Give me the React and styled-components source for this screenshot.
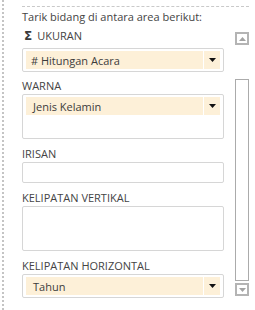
import React from 'react';
import styled, { createGlobalStyle } from 'styled-components';

const GlobalStyle = createGlobalStyle`
  html, body {
    margin: 0;
    padding: 0;
    background: #ffffff;
  }
  body {
    font-family: 'Open Sans', 'Liberation Sans', sans-serif;
    font-size: 11px;
    color: #444444;
  }
`;

const Pane = styled.div`
  display: flex;
  width: 255px;
  height: 310px;
  overflow: hidden;
`;

const DottedRule = styled.div`
  width: 0;
  margin-left: 2px;
  border-left: 2px dotted #c4c4c4;
`;

const Main = styled.div`
  display: flex;
  flex-direction: column;
  width: 227px;
  margin-left: 18px;
  padding-top: 6px;
`;

const Separator = styled.div`
  border-top: 1px dashed #c9c9c9;
`;

const Heading = styled.div`
  margin-top: 2px;
  line-height: 16px;
  white-space: nowrap;
`;

const Body = styled.div`
  display: flex;
  margin-top: 3px;
`;

const Fields = styled.div`
  display: flex;
  flex-direction: column;
  width: 202px;
`;

const Section = styled.div`
  display: flex;
  flex-direction: column;
  margin-top: ${p => p.$gap}px;
`;

const Label = styled.div`
  display: flex;
  align-items: center;
  gap: 5px;
  line-height: 16px;
  margin-bottom: ${p => (p.$sigma ? 4 : 0)}px;
  padding-left: ${p => (p.$sigma ? 2 : 0)}px;
  white-space: nowrap;
`;

const Sigma = styled.span`
  font-family: 'DejaVu Sans', sans-serif;
  font-size: 12px;
  font-weight: bold;
  color: #3a3a3a;
`;

const DropZone = styled.div`
  box-sizing: border-box;
  height: ${p => p.$height}px;
  border: 1px solid #d6d6d6;
  border-radius: 2px;
  padding: 2px 3px;
`;

const Pill = styled.div`
  display: flex;
  height: 18px;
  gap: 1px;
`;

const PillName = styled.div`
  flex: 1;
  display: flex;
  align-items: center;
  padding-left: ${p => (p.$measure ? 5 : 7)}px;
  background: #fdf0d8;
  color: #3c3c3c;
  white-space: nowrap;
`;

const PillMenu = styled.div`
  display: flex;
  align-items: center;
  justify-content: center;
  width: 16px;
  background: #fdf0d8;
`;

const ScrollBar = styled.div`
  display: flex;
  flex-direction: column;
  width: 14px;
  margin-left: 11px;
  padding: 4px 0 2px;
`;

const ScrollButton = styled.div`
  box-sizing: border-box;
  display: flex;
  align-items: center;
  justify-content: center;
  height: 13px;
  border: 2px solid #b4b4b4;
`;

const Thumb = styled.div`
  flex: 1;
  margin: 34px 0 2px;
  border: 1px solid #ababab;
`;

const Caret = ({ color = '#111', up = false, w = 7, h = 4 }) => (
  <svg width={w} height={h} viewBox="0 0 7 4">
    <polygon points={up ? '0,4 7,4 3.5,0' : '0,0 7,0 3.5,4'} fill={color} />
  </svg>
);

const Field = ({ name, measure }) => (
  <Pill>
    <PillName $measure={measure}>{measure ? `# ${name}` : name}</PillName>
    <PillMenu><Caret /></PillMenu>
  </Pill>
);

const areas = [
  { label: 'WARNA', gap: 6, height: 45, field: 'Jenis Kelamin' },
  { label: 'IRISAN', gap: 7, height: 21 },
  { label: 'KELIPATAN VERTIKAL', gap: 7, height: 45 },
  { label: 'KELIPATAN HORIZONTAL', gap: 7, height: 24, field: 'Tahun' },
];

const App = () => {
  return (
    <>
      <GlobalStyle />
      <Pane>
        <DottedRule />
        <Main>
          <Separator />
          <Heading>Tarik bidang di antara area berikut:</Heading>
          <Body>
            <Fields>
              <Section $gap={0}>
                <Label $sigma><Sigma>Σ</Sigma>UKURAN</Label>
                <DropZone $height={24}>
                  <Field name="Hitungan Acara" measure />
                </DropZone>
              </Section>
              {areas.map(area => (
                <Section key={area.label} $gap={area.gap}>
                  <Label>{area.label}</Label>
                  <DropZone $height={area.height}>
                    {area.field && <Field name={area.field} />}
                  </DropZone>
                </Section>
              ))}
            </Fields>
            <ScrollBar>
              <ScrollButton><Caret up color="#a3a3a3" /></ScrollButton>
              <Thumb />
              <ScrollButton><Caret color="#a3a3a3" /></ScrollButton>
            </ScrollBar>
          </Body>
        </Main>
      </Pane>
    </>
  );
};

export default App;
